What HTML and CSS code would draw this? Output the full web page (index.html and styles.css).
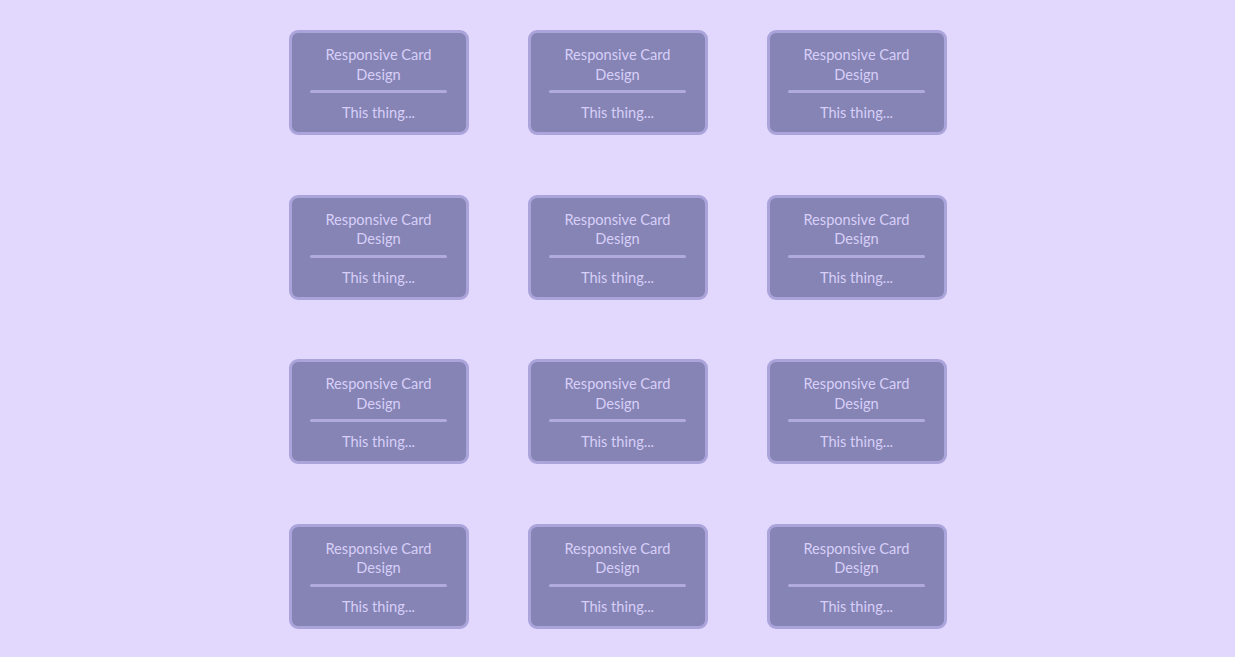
FILE: index.html
```html
<!DOCTYPE html>
<html lang="en">
<head>
<meta charset="utf-8">
<title>Responsive Cards</title>
<link rel="stylesheet" href="styles.css">
</head>
<body>
<main class="grid">
  <div class="card"><div class="card-title">Responsive Card Design</div><div class="card-rule"></div><div class="card-text">This thing...</div></div>
  <div class="card"><div class="card-title">Responsive Card Design</div><div class="card-rule"></div><div class="card-text">This thing...</div></div>
  <div class="card"><div class="card-title">Responsive Card Design</div><div class="card-rule"></div><div class="card-text">This thing...</div></div>
  <div class="card"><div class="card-title">Responsive Card Design</div><div class="card-rule"></div><div class="card-text">This thing...</div></div>
  <div class="card"><div class="card-title">Responsive Card Design</div><div class="card-rule"></div><div class="card-text">This thing...</div></div>
  <div class="card"><div class="card-title">Responsive Card Design</div><div class="card-rule"></div><div class="card-text">This thing...</div></div>
  <div class="card"><div class="card-title">Responsive Card Design</div><div class="card-rule"></div><div class="card-text">This thing...</div></div>
  <div class="card"><div class="card-title">Responsive Card Design</div><div class="card-rule"></div><div class="card-text">This thing...</div></div>
  <div class="card"><div class="card-title">Responsive Card Design</div><div class="card-rule"></div><div class="card-text">This thing...</div></div>
  <div class="card"><div class="card-title">Responsive Card Design</div><div class="card-rule"></div><div class="card-text">This thing...</div></div>
  <div class="card"><div class="card-title">Responsive Card Design</div><div class="card-rule"></div><div class="card-text">This thing...</div></div>
  <div class="card"><div class="card-title">Responsive Card Design</div><div class="card-rule"></div><div class="card-text">This thing...</div></div>
</main>
</body>
</html>
```
FILE: styles.css
```css
html, body {
  margin: 0;
  padding: 0;
  background: #e2d8fe;
}
body {
  font-family: "Lato", "Open Sans", sans-serif;
  color: #d8cff8;
}
.grid {
  display: grid;
  grid-template-columns: repeat(3, 180px);
  column-gap: 59px;
  row-gap: 59.6px;
  justify-content: center;
  padding: 30px 0 29px;
}
.card {
  box-sizing: border-box;
  height: 105px;
  border: 3px solid #aba4da;
  border-radius: 9px;
  background: #8584b5;
  padding: 12px 18px 0;
  text-align: center;
  font-size: 14.6px;
  line-height: 19.5px;
}
.card-title {
  width: 138px;
  margin: 0 auto;
}
.card-rule {
  width: 137px;
  height: 3px;
  margin: 6px auto 10px;
  border-radius: 2px;
  background: #b1aadd;
}
.card-text {
  line-height: 20px;
}
```
